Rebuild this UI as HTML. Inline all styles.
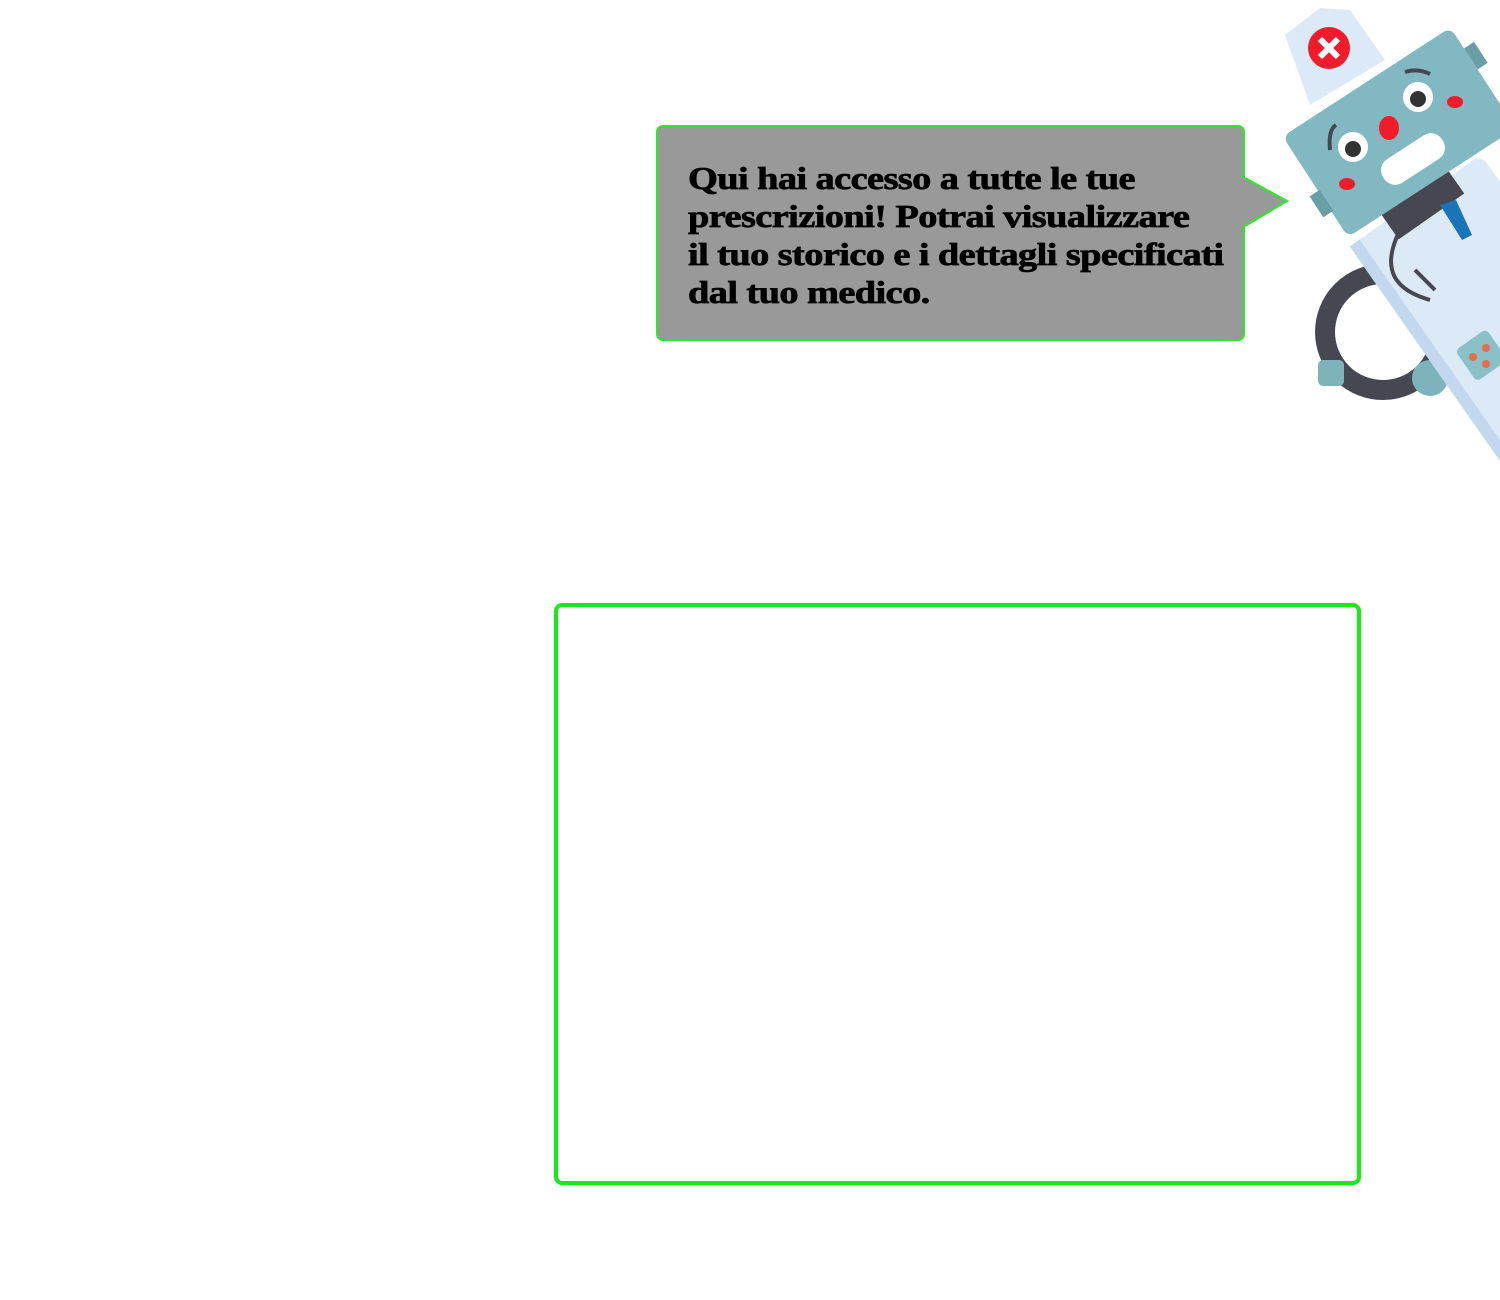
<!DOCTYPE html>
<html><head><style>
html,body{margin:0;padding:0;width:1500px;height:1300px;background:#fff;overflow:hidden;position:relative}
.bub{position:absolute;left:656px;top:125px;width:585px;height:212px;background:#999;border:2px solid #22ee22;border-radius:7px;box-sizing:content-box}
.bub p{margin:0;position:absolute;left:30px;top:32px;width:560px;font:bold 32px/38px "Liberation Serif",serif;color:#000;letter-spacing:-0.5px;transform:scaleX(1.2);transform-origin:0 0;-webkit-text-stroke:0.7px #000;white-space:nowrap}
.box{position:absolute;left:554px;top:603px;width:799px;height:574px;border:4px solid #11ee11;border-radius:8px}
</style></head><body>
<div class="bub"><p>Qui hai accesso a tutte le tue<br>prescrizioni! Potrai visualizzare<br>il tuo storico e i dettagli specificati<br>dal tuo medico.</p></div>
<svg style="position:absolute;left:0;top:0" width="1500" height="1300">
<polygon points="1243,178 1287,201 1243,226" fill="#999"/>
<polyline points="1245,178 1287,201 1245,226" fill="none" stroke="#22ee22" stroke-width="2"/>
<circle cx="1383" cy="332" r="58" fill="none" stroke="#474752" stroke-width="20"/>
<rect x="1318" y="360" width="26" height="26" rx="5" fill="#7fb3bb"/>
<circle cx="1430" cy="378" r="18" fill="#7fb3bb"/>
<g transform="rotate(-35 1430 300)">
<rect x="1395" y="210" width="160" height="330" rx="10" fill="#dceaf8"/>
<rect x="1395" y="210" width="12" height="330" fill="#c3d8ee"/>
</g>
<path d="M1400,230 C1380,270 1395,290 1430,300 M1415,270 l20,20" fill="none" stroke="#474752" stroke-width="4"/>
<rect x="1462" y="337" width="38" height="38" rx="5" fill="#8cc0c8" transform="rotate(-35 1480 355)"/>
<circle cx="1473" cy="357" r="4" fill="#e86b4a"/><circle cx="1486" cy="348" r="4" fill="#e86b4a"/><circle cx="1486" cy="364" r="4" fill="#e86b4a"/>
<rect x="1380" y="175" width="80" height="45" fill="#474752" transform="rotate(-35 1420 200)"/>
<path d="M1440,205 L1456,200 L1472,235 L1462,240 Z" fill="#1a74b8"/>
<path d="M1285,35 L1320,8 L1350,10 L1385,60 L1310,105 Z" fill="#dceaf8"/>
<circle cx="1329" cy="48" r="21" fill="#f01c2c"/>
<path d="M1320,39 L1338,57 M1338,39 L1320,57" stroke="#fff" stroke-width="6"/>
<g transform="rotate(-33 1395 135)">
<rect x="1300" y="75" width="200" height="120" rx="8" fill="#82b8c1"/>
<rect x="1290" y="140" width="12" height="25" fill="#6a9ea6"/>
<rect x="1500" y="100" width="12" height="25" fill="#6a9ea6"/>
</g>
<circle cx="1353" cy="147" r="15" fill="#fff"/><circle cx="1353" cy="149" r="8" fill="#333"/>
<circle cx="1418" cy="97" r="15" fill="#fff"/><circle cx="1418" cy="99" r="8" fill="#333"/>
<ellipse cx="1389" cy="128" rx="10" ry="12" fill="#f01c2c"/>
<ellipse cx="1347" cy="184" rx="8" ry="6" fill="#f01c2c"/>
<ellipse cx="1455" cy="102" rx="8" ry="6" fill="#f01c2c"/>
<rect x="1378" y="145" width="70" height="28" rx="13" fill="#fff" transform="rotate(-33 1413 159)"/>
<path d="M1330,150 Q1328,130 1336,125 M1405,72 Q1418,68 1430,74" fill="none" stroke="#474752" stroke-width="4"/>
</svg>
<div class="box"></div>
</body></html>
